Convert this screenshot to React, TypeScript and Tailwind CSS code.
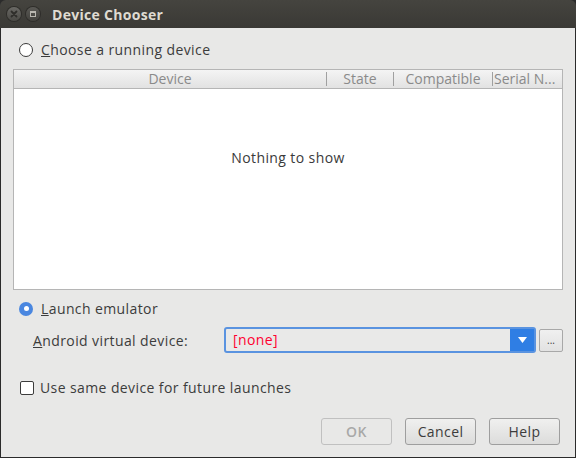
export default function App() {
  const font = { fontFamily: '"Open Sans", "DejaVu Sans", sans-serif' };
  return (
    <div className="flex h-[458px] w-[576px] flex-col overflow-hidden bg-[#2b2b2b] text-[14px] tracking-[0.4px] text-[#3c3c3c]" style={font}>
      {/* title bar */}
      <div className="flex h-[28px] shrink-0 items-center rounded-t-[6px] bg-gradient-to-b from-[#45443f] to-[#3a3935] pl-[7px]">
        <div className="flex h-[14px] w-[14px] items-center justify-center rounded-full bg-gradient-to-b from-[#6a6965] to-[#4a4945] shadow-[0_0_0_1px_#2e2d2a]">
          <svg width="8" height="8" viewBox="0 0 8 8">
            <path d="M1.5 1.5 L6.5 6.5 M6.5 1.5 L1.5 6.5" stroke="#2f2e2b" strokeWidth="1.8" strokeLinecap="round" />
          </svg>
        </div>
        <div className="ml-[5px] flex h-[14px] w-[14px] items-center justify-center rounded-full bg-gradient-to-b from-[#5a5955] to-[#42413d] shadow-[0_0_0_1px_#2e2d2a]">
          <div className="h-[6px] w-[6px] border border-[#b9b7b0] border-t-2" />
        </div>
        <span className="ml-[12px] text-[14px] font-bold tracking-[0.3px] text-[#dfdbd2]">Device Chooser</span>
      </div>

      {/* body */}
      <div className="mx-px mb-px flex flex-1 flex-col bg-[#e8e8e7] px-[12px]">
        <label className="mt-[11px] flex items-center gap-[8px] pl-[6px]">
          <span className="h-[14px] w-[14px] rounded-full border border-[#3c3c3c] bg-white" />
          <span><u>C</u>hoose a running device</span>
        </label>

        <div className="mt-[9px] flex h-[221px] flex-col border border-[#b5b5b5] bg-white">
          <div className="flex h-[19px] border-b border-[#b5b5b5] bg-gradient-to-b from-[#f4f4f4] to-[#e2e2e2] text-[14px] leading-[18px] tracking-normal text-[#8a8a8a]">
            <div className="w-[312px] text-center">Device</div>
            <div className="my-[2px] w-px bg-[#a0a0a0]" />
            <div className="w-[66px] text-center">State</div>
            <div className="my-[2px] w-px bg-[#a0a0a0]" />
            <div className="w-[98px] text-center">Compatible</div>
            <div className="my-[2px] w-px bg-[#a0a0a0]" />
            <div className="w-[68px] overflow-hidden whitespace-nowrap pl-[1px]">Serial N...</div>
          </div>
          <div className="flex flex-1 items-start justify-center pt-[58px] text-[#3a3a3a]">Nothing to show</div>
        </div>

        <label className="mt-[8px] flex items-center gap-[8px] pl-[6px]">
          <span className="flex h-[14px] w-[14px] items-center justify-center rounded-full bg-[#4a87e0]">
            <span className="h-[5px] w-[5px] rounded-full bg-white" />
          </span>
          <span><u>L</u>aunch emulator</span>
        </label>

        <div className="mt-[8px] flex items-center pl-[20px]">
          <span className="w-[191px]"><u>A</u>ndroid virtual device:</span>
          <div className="flex h-[26px] w-[312px] items-stretch rounded-[3px] border-2 border-[#5a93e0] bg-[#e9e9e8]">
            <span className="flex-1 pl-[7px] leading-[21px] text-[#ff0030]">[none]</span>
            <span className="flex w-[24px] items-center justify-center bg-[#2f7ee4]">
              <svg width="9" height="6" viewBox="0 0 9 6"><path d="M0 0 H9 L4.5 6 Z" fill="white" /></svg>
            </span>
          </div>
          <div className="ml-[3px] flex h-[23px] w-[24px] items-center justify-center rounded-[2px] border border-[#a8a8a8] bg-gradient-to-b from-[#f0f0f0] to-[#e2e2e2] text-[10px] leading-none tracking-normal text-[#3c3c3c]">...</div>
        </div>

        <label className="mt-[24px] flex items-center gap-[6px] pl-[7px]">
          <span className="h-[14px] w-[14px] rounded-[2px] border border-[#3c3c3c] bg-white" />
          <span>Use same device for future launches</span>
        </label>

        <div className="mt-[20px] flex justify-end gap-[13px] pr-[3px]">
          <button className="h-[27px] w-[71px] rounded-[3px] border border-[#c0c0c0] bg-[#e8e8e7] text-[14px] font-semibold text-[#a8a8a8]">OK</button>
          <button className="h-[27px] w-[71px] rounded-[3px] border border-[#9e9e9e] bg-gradient-to-b from-[#f0f0ef] to-[#dcdcdb] text-[14px] text-[#3c3c3c]">Cancel</button>
          <button className="h-[27px] w-[71px] rounded-[3px] border border-[#9e9e9e] bg-gradient-to-b from-[#f0f0ef] to-[#dcdcdb] text-[14px] text-[#3c3c3c]">Help</button>
        </div>
      </div>
    </div>
  );
}
